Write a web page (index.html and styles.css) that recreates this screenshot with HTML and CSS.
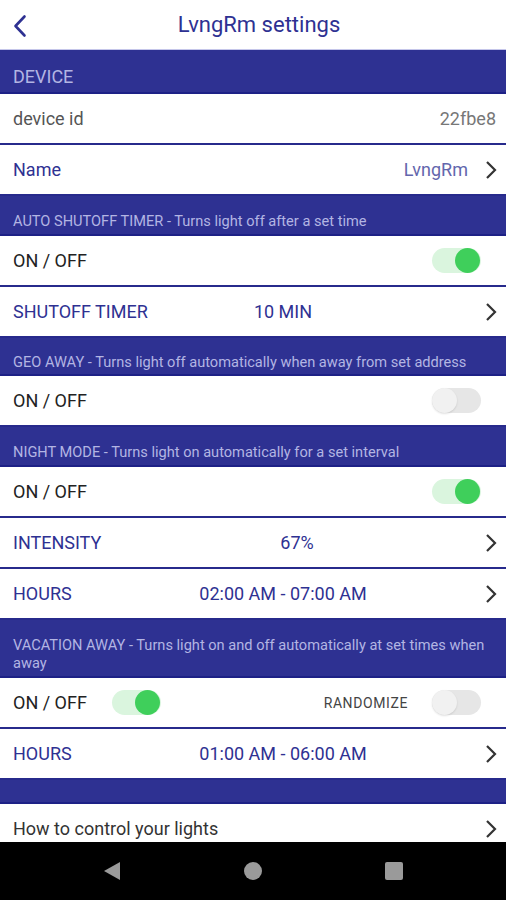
FILE: index.html
```html
<!DOCTYPE html>
<html lang="en">
<head>
  <meta charset="UTF-8">
  <title>LvngRm settings</title>
  <link rel="stylesheet" href="styles.css">
</head>
<body>

  <div class="pantalla">
    <header class="barra">
      <svg class="atras" width="14" height="24" viewBox="0 0 14 24">
        <path d="M11.5 2.5 L2.5 12 L11.5 21.5" fill="none" stroke="#2e3192" stroke-width="2.6" stroke-linecap="round" stroke-linejoin="round"/>
      </svg>
      <h1>LvngRm settings</h1>
    </header>

    <main class="lista">
      <div class="banda banda-grande">DEVICE</div>
      <div class="fila">
        <span class="gris">device id</span>
        <span class="dato">22fbe8</span>
      </div>
      <div class="fila">
        <span class="azul">Name</span>
        <span class="dato dato-azul">LvngRm</span>
        <svg class="flecha pegada" width="12" height="20" viewBox="0 0 12 20"><path d="M2 2 L10 10 L2 18" fill="none" stroke="#333" stroke-width="2.2"/></svg>
      </div>

      <div class="banda">AUTO SHUTOFF TIMER - Turns light off after a set time</div>
      <div class="fila">
        <span class="negro">ON / OFF</span>
        <span class="interruptor encendido"></span>
      </div>
      <div class="fila fila-valor">
        <span class="azul">SHUTOFF TIMER</span>
        <span class="valor">10 MIN</span>
        <svg class="flecha" width="12" height="20" viewBox="0 0 12 20"><path d="M2 2 L10 10 L2 18" fill="none" stroke="#333" stroke-width="2.2"/></svg>
      </div>

      <div class="banda banda-baja">GEO AWAY - Turns light off automatically when away from set address</div>
      <div class="fila">
        <span class="negro">ON / OFF</span>
        <span class="interruptor"></span>
      </div>

      <div class="banda">NIGHT MODE - Turns light on automatically for a set interval</div>
      <div class="fila">
        <span class="negro">ON / OFF</span>
        <span class="interruptor encendido"></span>
      </div>
      <div class="fila fila-valor">
        <span class="azul">INTENSITY</span>
        <span class="valor corrido">67%</span>
        <svg class="flecha" width="12" height="20" viewBox="0 0 12 20"><path d="M2 2 L10 10 L2 18" fill="none" stroke="#333" stroke-width="2.2"/></svg>
      </div>
      <div class="fila fila-valor">
        <span class="azul">HOURS</span>
        <span class="valor">02:00 AM - 07:00 AM</span>
        <svg class="flecha" width="12" height="20" viewBox="0 0 12 20"><path d="M2 2 L10 10 L2 18" fill="none" stroke="#333" stroke-width="2.2"/></svg>
      </div>

      <div class="banda">VACATION AWAY - Turns light on and off automatically at set times when away</div>
      <div class="fila">
        <span class="negro">ON / OFF</span>
        <span class="interruptor encendido separado"></span>
        <span class="random">RANDOMIZE</span>
        <span class="interruptor final"></span>
      </div>
      <div class="fila fila-valor">
        <span class="azul">HOURS</span>
        <span class="valor">01:00 AM - 06:00 AM</span>
        <svg class="flecha" width="12" height="20" viewBox="0 0 12 20"><path d="M2 2 L10 10 L2 18" fill="none" stroke="#333" stroke-width="2.2"/></svg>
      </div>

      <div class="banda banda-vacia"></div>
      <div class="fila">
        <span class="oscuro">How to control your lights</span>
        <svg class="flecha" width="12" height="20" viewBox="0 0 12 20"><path d="M2 2 L10 10 L2 18" fill="none" stroke="#333" stroke-width="2.2"/></svg>
      </div>
    </main>

    <nav class="navegacion">
      <svg width="20" height="20" viewBox="0 0 20 20"><path d="M18 1 L18 19 L2 10 Z" fill="#9a9a9a"/></svg>
      <svg width="20" height="20" viewBox="0 0 20 20"><circle cx="10" cy="10" r="9" fill="#9a9a9a"/></svg>
      <svg width="20" height="20" viewBox="0 0 20 20"><rect x="1" y="1" width="18" height="18" rx="2" fill="#9a9a9a"/></svg>
    </nav>
  </div>

</body>
</html>
```

FILE: styles.css
```css
body {
  margin: 0;
  font-family: Roboto, "Liberation Sans", sans-serif;
  background-color: #ffffff;
}

.pantalla {
  width: 506px;
  height: 900px;
  display: flex;
  flex-direction: column;
  overflow: hidden;
}

.barra {
  height: 49px;
  padding-left: 12px;
  border-bottom: 1px solid #c5c6ea;
  display: flex;
  align-items: center;
  justify-content: center;
  position: relative;
}

.atras {
  position: absolute;
  left: 13px;
  top: 14px;
}

h1 {
  margin: 0;
  font-size: 22px;
  font-weight: 400;
  color: #2e3192;
}

.lista {
  flex: 1;
  overflow: hidden;
}

.banda {
  background-color: #2e3192;
  color: #b3b5e3;
  font-size: 14.6px;
  line-height: 18px;
  padding: 16px 4px 4px 13px;
  border-bottom: 2px solid #1d2186;
}

.banda-grande {
  font-size: 18px;
  line-height: 20px;
  padding: 17px 13px 5px;
}

.banda-baja {
  padding-top: 15px;
  padding-bottom: 3px;
}

.banda-vacia {
  padding: 0;
  height: 22px;
}

.fila {
  height: 49px;
  padding: 0 9px 0 13px;
  display: flex;
  align-items: center;
  font-size: 18px;
  border-bottom: 2px solid #272a8c;
}

.fila-valor {
  display: grid;
  grid-template-columns: 157px 226px 1fr auto;
  align-items: center;
}

.fila-valor .flecha {
  grid-column: 4;
}

.gris { color: #555555; }
.azul { color: #2e3192; }
.negro { color: #222222; }
.oscuro { color: #333333; }

.dato {
  margin-left: auto;
  color: #777777;
  margin-right: 1px;
}

.dato-azul {
  color: #6366ad;
  margin-right: 0;
}

.valor {
  color: #2e3192;
  text-align: center;
}

.corrido {
  padding-left: 28px;
}

.flecha {
  margin-left: auto;
}

.flecha.pegada {
  margin-left: 17px;
}

.interruptor {
  width: 49px;
  height: 25px;
  border-radius: 13px;
  background-color: #e6e6e6;
  margin-left: auto;
  margin-right: 16px;
  position: relative;
}

.interruptor::after {
  content: "";
  position: absolute;
  left: 0;
  top: 0;
  width: 25px;
  height: 25px;
  border-radius: 50%;
  background-color: #f1f1f1;
  box-shadow: 0 1px 2px rgba(0, 0, 0, 0.12);
}

.encendido {
  background-color: #daf5de;
}

.encendido::after {
  left: 23px;
  background-color: #3fcf5b;
  box-shadow: none;
}

.separado {
  margin-left: 25px;
  margin-right: 0;
}

.interruptor.final {
  margin-left: 0;
}

.random {
  margin-left: auto;
  margin-right: 24px;
  font-size: 14px;
  letter-spacing: 0.6px;
  color: #444444;
}

.navegacion {
  height: 58px;
  flex-shrink: 0;
  background-color: #000000;
  display: flex;
  align-items: center;
  justify-content: space-between;
  padding: 0 102px 0 102px;
}
```
